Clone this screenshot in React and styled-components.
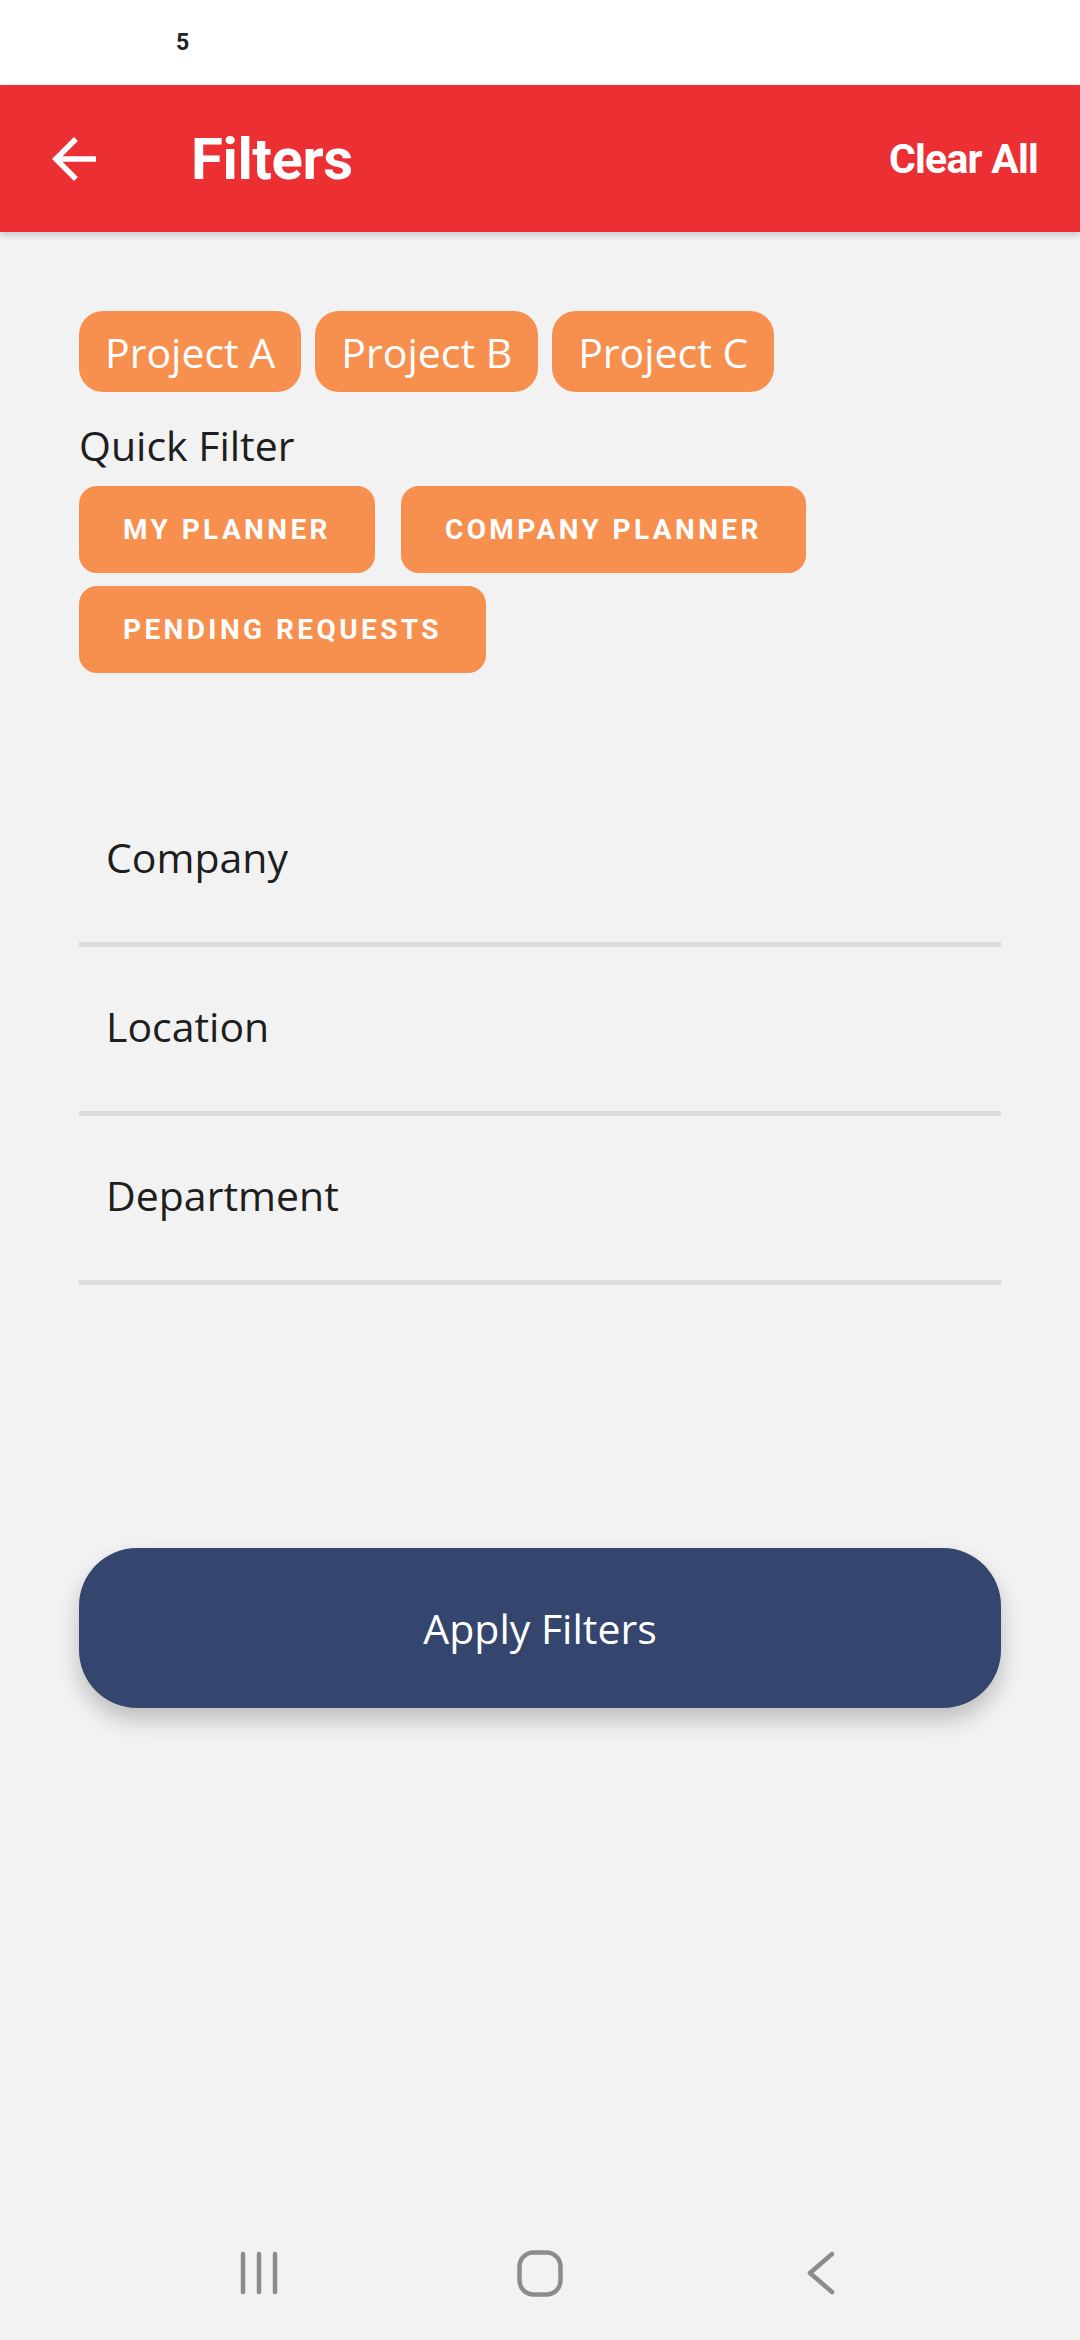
import React from 'react';
import styled, { createGlobalStyle } from 'styled-components';

const GlobalStyle = createGlobalStyle`
  html, body {
    margin: 0;
    padding: 0;
    background: #f2f2f2;
    font-family: 'Open Sans', 'Noto Sans', sans-serif;
  }
`;

const Screen = styled.div`
  width: 1080px;
  height: 2340px;
  display: flex;
  flex-direction: column;
  background: #f2f2f2;
  overflow: hidden;
`;

const StatusBar = styled.div`
  height: 85px;
  background: #fff;
  display: flex;
  align-items: center;
  padding-left: 176px;
  font-family: Roboto, 'Liberation Sans', sans-serif;
  font-weight: 700;
  font-size: 23px;
  color: #222;
`;

const Header = styled.header`
  position: relative;
  z-index: 1;
  height: 147px;
  background: #ec2f33;
  box-shadow: 0 3px 7px rgba(0, 0, 0, 0.18);
  display: flex;
  align-items: center;
  padding: 0 42px 0 41px;
  color: #fff;
  font-family: Roboto, 'Liberation Sans', sans-serif;
  font-weight: 700;
`;

const BackButton = styled.button`
  width: 66px;
  height: 66px;
  padding: 0;
  border: none;
  background: none;
  display: flex;
  align-items: center;
  justify-content: center;
`;

const Title = styled.h1`
  margin: 0 0 0 84px;
  font-size: 58px;
  font-weight: 700;
  letter-spacing: -0.4px;
`;

const ClearAll = styled.span`
  margin-left: auto;
  font-size: 41px;
  letter-spacing: -0.8px;
`;

const Content = styled.main`
  padding: 79px 79px 0;
  display: flex;
  flex-direction: column;
`;

const ChipRow = styled.div`
  display: flex;
  gap: 14px;
`;

const Chip = styled.span`
  height: 81px;
  padding: 0 26px;
  border-radius: 24px;
  background: #f78f4f;
  color: #fff;
  font-size: 41px;
  display: flex;
  align-items: center;
`;

const SectionLabel = styled.div`
  margin-top: 25px;
  font-size: 41px;
  line-height: 56px;
  color: #1e1e1e;
`;

const QuickGrid = styled.div`
  margin-top: 13px;
  display: flex;
  flex-wrap: wrap;
  column-gap: 26px;
  row-gap: 13px;
  width: 760px;
`;

const QuickButton = styled.button`
  height: 87px;
  padding: 0 44px;
  border: none;
  border-radius: 18px;
  background: #f78f4f;
  color: #fff;
  font-family: Roboto, 'Liberation Sans', sans-serif;
  font-weight: 700;
  font-size: 28px;
  letter-spacing: 3.4px;
  text-transform: uppercase;
`;

const FilterList = styled.div`
  margin-top: 105px;
  display: flex;
  flex-direction: column;
`;

const FilterRow = styled.div`
  height: 169px;
  box-sizing: border-box;
  padding: 0 0 6px 27px;
  border-bottom: 5px solid #dcdcdc;
  display: flex;
  align-items: center;
  font-size: 41px;
  color: #1e1e1e;
`;

const ApplyButton = styled.button`
  margin-top: 263px;
  height: 160px;
  border: none;
  border-radius: 58px;
  background: #34466d;
  color: #fff;
  font-family: 'Open Sans', 'Noto Sans', sans-serif;
  font-size: 41px;
  box-shadow: 0 12px 22px rgba(0, 0, 0, 0.22);
`;

const NavBar = styled.nav`
  margin-top: auto;
  height: 134px;
  display: grid;
  grid-template-columns: repeat(3, 281px);
  justify-content: center;
  align-items: center;
  justify-items: center;
`;

const navStroke = '#8c8c8c';

const App = () => (
  <Screen>
    <GlobalStyle />
    <StatusBar>5</StatusBar>
    <Header>
      <BackButton aria-label="Back">
        <svg width="66" height="66" viewBox="0 0 24 24">
          <path fill="#fff" d="M20 11H7.83l5.59-5.59L12 4l-8 8 8 8 1.41-1.41L7.83 13H20v-2z" />
        </svg>
      </BackButton>
      <Title>Filters</Title>
      <ClearAll>Clear All</ClearAll>
    </Header>
    <Content>
      <ChipRow>
        <Chip>Project A</Chip>
        <Chip>Project B</Chip>
        <Chip>Project C</Chip>
      </ChipRow>
      <SectionLabel>Quick Filter</SectionLabel>
      <QuickGrid>
        <QuickButton>My Planner</QuickButton>
        <QuickButton>Company Planner</QuickButton>
        <QuickButton>Pending Requests</QuickButton>
      </QuickGrid>
      <FilterList>
        <FilterRow>Company</FilterRow>
        <FilterRow>Location</FilterRow>
        <FilterRow>Department</FilterRow>
      </FilterList>
      <ApplyButton>Apply Filters</ApplyButton>
    </Content>
    <NavBar>
      <svg width="40" height="44" viewBox="0 0 40 44">
        <g stroke={navStroke} strokeWidth="4.5" strokeLinecap="round">
          <line x1="4" y1="3" x2="4" y2="41" />
          <line x1="20" y1="3" x2="20" y2="41" />
          <line x1="36" y1="3" x2="36" y2="41" />
        </g>
      </svg>
      <svg width="46" height="47" viewBox="0 0 46 47">
        <rect x="2.5" y="2.5" width="41" height="42" rx="14" fill="none" stroke={navStroke} strokeWidth="4.5" />
      </svg>
      <svg width="30" height="44" viewBox="0 0 30 44">
        <polyline points="26,3 4,22 26,41" fill="none" stroke={navStroke} strokeWidth="4.5" strokeLinecap="round" strokeLinejoin="round" />
      </svg>
    </NavBar>
  </Screen>
);

export default App;
